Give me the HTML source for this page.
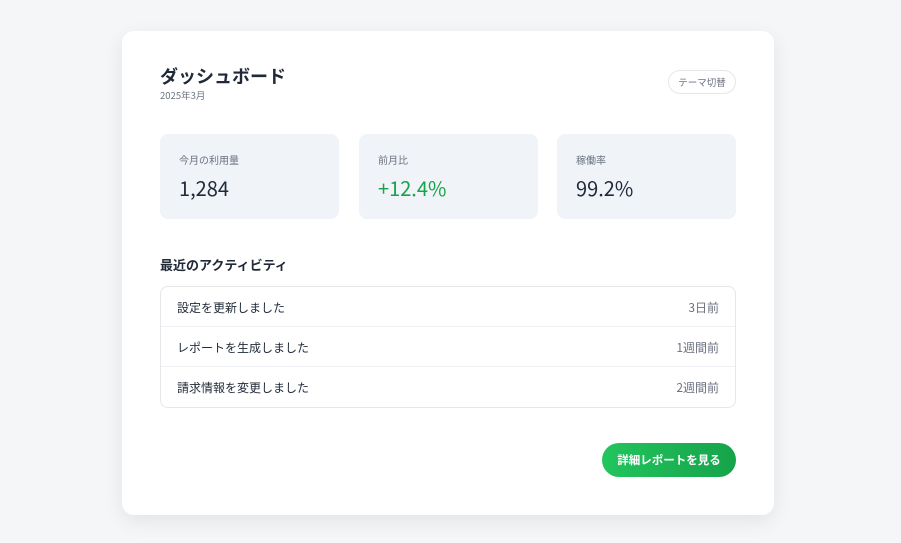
<!DOCTYPE html>
<html><head><meta charset="utf-8"><style>
*{box-sizing:border-box;margin:0;padding:0}
body{width:901px;height:543px;background:#f4f6f8;font-family:"Noto Sans CJK JP","Liberation Sans",sans-serif;color:#1f2937;position:relative;overflow:hidden}
.card{position:absolute;left:122px;top:31px;width:652px;height:484px;background:#fff;border-radius:12px;box-shadow:0 6px 20px rgba(0,0,0,.08)}
.abs{position:absolute;line-height:1.2}
h1{position:absolute;left:38px;top:33px;font-size:18px;font-weight:700;line-height:24px}
.sub{left:38px;top:59px;font-size:9.5px;color:#6b7280}
.theme{left:546px;top:39px;width:68px;height:24px;border:1px solid #e5e7eb;border-radius:12px;font-size:9.5px;color:#6b7280;text-align:center;line-height:22px}
.stat{top:103px;width:179px;height:85px;background:#f0f3f8;border-radius:8px}
.stat .l{position:absolute;left:19px;top:20px;font-size:10px;color:#6b7280;line-height:12px}
.stat .v{position:absolute;left:19px;top:41px;font-size:20px;line-height:26px}
.sec{left:38px;top:226px;font-size:13px;font-weight:700}
.list{left:38px;top:255px;width:576px;height:122px;border:1px solid #e5e7eb;border-radius:8px}
.row{height:40px;display:flex;justify-content:space-between;align-items:center;padding:3px 16px 0;font-size:12px;border-bottom:1px solid #eef0f3}
.row:last-child{border-bottom:none}
.row span:last-child{color:#6b7280}
.btn{left:480px;top:412px;width:134px;height:34px;border-radius:17px;background:linear-gradient(90deg,#22c55e,#16a34a);color:#fff;font-size:11.5px;font-weight:700;text-align:center;line-height:34px}
</style></head><body>
<div class="card">
<h1>ダッシュボード</h1>
<div class="abs sub">2025年3月</div>
<div class="abs theme">テーマ切替</div>
<div class="abs stat" style="left:38px"><div class="l">今月の利用量</div><div class="v">1,284</div></div>
<div class="abs stat" style="left:237px"><div class="l">前月比</div><div class="v" style="color:#16a34a">+12.4%</div></div>
<div class="abs stat" style="left:435px"><div class="l">稼働率</div><div class="v">99.2%</div></div>
<div class="abs sec">最近のアクティビティ</div>
<div class="abs list">
<div class="row"><span>設定を更新しました</span><span>3日前</span></div>
<div class="row"><span>レポートを生成しました</span><span>1週間前</span></div>
<div class="row"><span>請求情報を変更しました</span><span>2週間前</span></div>
</div>
<div class="abs btn">詳細レポートを見る</div>
</div>
</body></html>
